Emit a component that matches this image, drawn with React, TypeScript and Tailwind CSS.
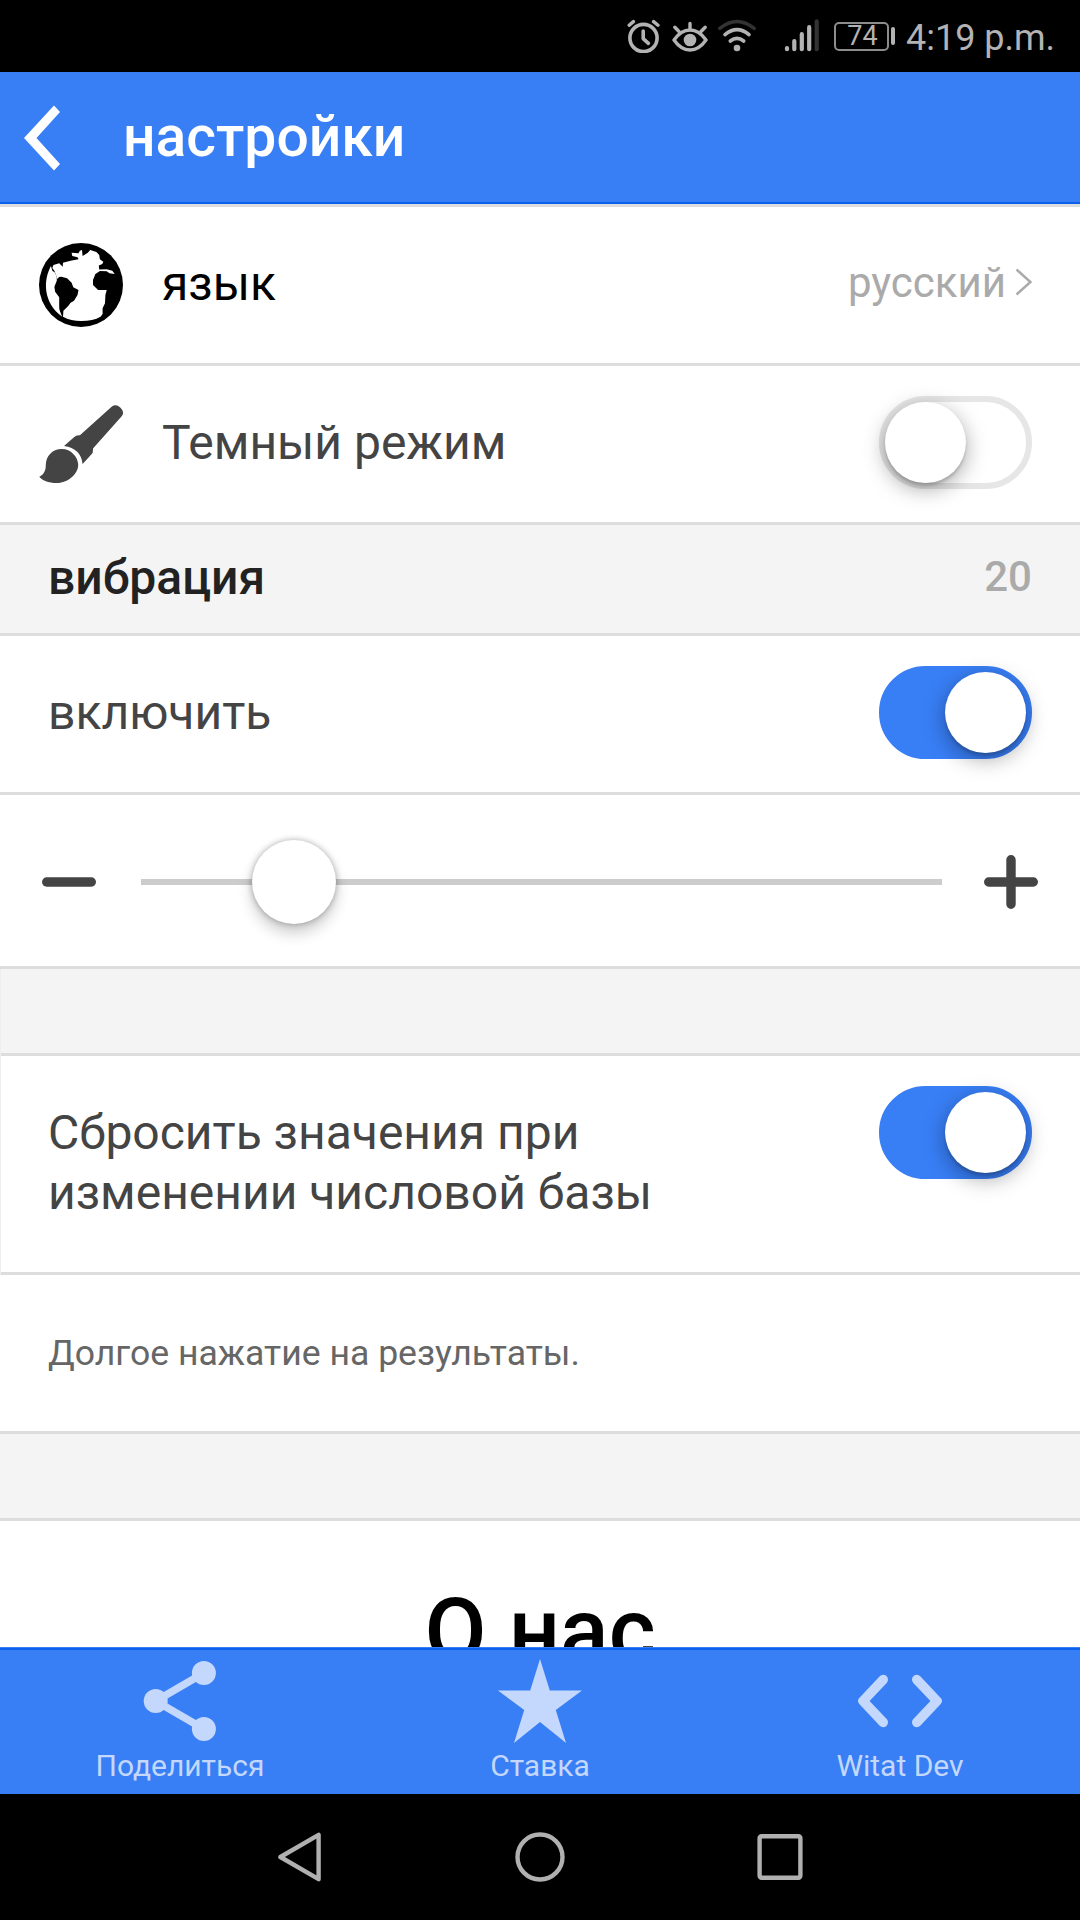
import { useState } from "react";
import type { ReactNode } from "react";
import clsx from "clsx";

interface ToggleProps {
  checked: boolean;
  onChange: (checked: boolean) => void;
}

interface TabProps {
  label: string;
  icon: ReactNode;
}

const MIN = 5;
const MAX = 100;

function AlarmIcon() {
  return (
    <svg width="34" height="34" viewBox="0 0 34 34" fill="none" stroke="#b3b3b3" strokeLinecap="round">
      <circle cx="16.5" cy="19" r="13.6" strokeWidth="3.6" />
      <path d="M16.2 12v7.6l5.2 4.8" strokeWidth="3.6" strokeLinejoin="round" />
      <path d="M2.2 6.2 6.4 2.6M26.6 2.6l4.4 3.6" strokeWidth="3.4" />
    </svg>
  );
}

function EyeIcon() {
  return (
    <svg width="36" height="34" viewBox="0 0 36 34" fill="none" stroke="#b3b3b3" strokeLinecap="round">
      <path d="M2 21Q9 11 18 11t16 10q-7 10-16 10T2 21Z" strokeWidth="3.4" strokeLinejoin="round" />
      <path d="M18 10V4.5M7 12.5 2.8 8.2M29 12.5l4.2-4.3" strokeWidth="3.4" />
      <circle cx="18" cy="21" r="6.3" fill="#b3b3b3" stroke="none" />
    </svg>
  );
}

function WifiIcon() {
  return (
    <svg width="38" height="34" viewBox="0 0 38 34" fill="none" stroke="#b3b3b3" strokeLinecap="round">
      <path d="M1.8 9.4q17.2-14 34.4 0" stroke="#333" strokeWidth="3.4" />
      <path d="M7 15.6q12-10 24 0M12.3 22q6.7-5.4 13.4 0" strokeWidth="3.6" />
      <circle cx="19" cy="29" r="3.3" fill="#b3b3b3" stroke="none" />
    </svg>
  );
}

function SignalIcon() {
  return (
    <svg width="36" height="34" viewBox="0 0 36 34" fill="none" stroke="#b3b3b3" strokeWidth="4.2" strokeLinecap="round">
      <path d="M3 29v1.2M10.3 22v8.2M17.8 15.2v15M25.2 8.2v22" />
      <path d="M32.7 2.4v27.8" stroke="#333" />
    </svg>
  );
}

function StatusBar() {
  return (
    <div className="flex h-[72px] items-center bg-black pl-[627px] text-[#b3b3b3]">
      <AlarmIcon />
      <div className="ml-[11px]">
        <EyeIcon />
      </div>
      <div className="ml-[10px]">
        <WifiIcon />
      </div>
      <div className="ml-[28px]">
        <SignalIcon />
      </div>
      <div className="ml-[14px] flex h-[29px] w-[55px] items-center justify-center rounded-[5px] border-2 border-[#8c8c8c] pl-[2px] text-[27px] leading-none">
        74
      </div>
      <div className="ml-[2px] h-[18px] w-[4px] rounded-[2px] bg-[#b3b3b3]" />
      <span className="ml-[11px] whitespace-nowrap pt-[4px] text-[36px] leading-none">4:19 p.m.</span>
    </div>
  );
}

function Header() {
  return (
    <header className="flex h-[132px] items-center border-b-2 border-[#0c60ee] bg-[#387ef5] pl-[24px] text-white">
      <svg className="mt-[2px]" width="36" height="66" viewBox="0 0 36 66">
        <path d="M30 0.5 36 7 12.5 33 36 59l-6 6.5L0 33Z" fill="currentColor" />
      </svg>
      <h1 className="ml-[63px] pb-[2px] text-[57px] font-medium leading-none">настройки</h1>
    </header>
  );
}

function EarthIcon() {
  return (
    <svg width="84" height="84" viewBox="0 0 84 84">
      <circle cx="42" cy="42" r="42" fill="#000" />
      <path
        fill="#fff"
        d="M12 23C4 37 4 60 23.3 73.7 21 69 20 66 20.2 63.7V54.3L16.1 48.7 15.4 43.7 17.8 37.7V34.3L16.1 29.7 13.3 27.7Z"
      />
      <path
        fill="#fff"
        d="M18.5 36 20 34 22.3 33.7 28.1 35.3 32.6 39.7 34.3 44.3 39.5 47 38.5 52 35 57.7 31.6 59.7 29.2 63 24.4 67.7 24 73.7Q32 78 42 78 54 78 61.5 73.7L63.6 71V65.3L66 60.3 66.4 52 67.7 47 59.1 47 54 42V37L56.4 31 60.9 28 67.7 28.3 70.5 30.3 75.7 31 73.3 27.7 67.7 26.3 60.2 26.5 59.8 22.5 63.3 21 64.3 18.7 60.9 16.3 60.2 12 57.4 9 51.2 7 48.8 9.7 43.6 13 43 7 40.9 7.7 39.5 10.3 32.6 9.7 33.3 13 38.5 14.3 39.5 16.3 31.6 17.7 24 19.7 23.7 23.7 20.2 20.3 14.4 22 13.3 25 15.5 28Z"
      />
    </svg>
  );
}

function BrushIcon() {
  return (
    <svg width="84" height="78" viewBox="0 0 84 78" fill="#444">
      <path d="M72.9 1.6Q77-1.6 81.5 2.7 85.8 7 82.9 10.9L54 43.4Q54.4 47.6 52.3 49.6L43.6 59Q42 43.5 25 41L35 32.3Q37.4 29.8 40.9 30.3Z" />
      <path d="M23 44C31.6 44 39.2 51.7 39.2 60S29.9 78 17.8 78C9.2 78 3 75.3.3 71.7 5 69.3 6.8 65.7 6.8 60 6.8 51.7 12.7 44 23 44Z" />
    </svg>
  );
}

function ShareIcon() {
  return (
    <svg width="84" height="84" viewBox="0 0 84 84" fill="currentColor">
      <path d="M65.9 14 17.7 42l48.2 28" fill="none" stroke="currentColor" strokeWidth="7.6" />
      <circle cx="65.9" cy="14" r="12" />
      <circle cx="17.7" cy="42" r="12" />
      <circle cx="65.9" cy="70" r="12" />
    </svg>
  );
}

function StarIcon() {
  return (
    <svg width="84" height="84" viewBox="0 0 84 84" fill="currentColor">
      <path d="M42 0 51.8 31.5H84L57.8 51 68 84 42 63 16 84 26.2 51 0 31.5H32.2Z" />
    </svg>
  );
}

function CodeIcon() {
  return (
    <svg width="84" height="84" viewBox="0 0 84 84" fill="none" stroke="currentColor" strokeWidth="9.6" strokeLinecap="round" strokeLinejoin="round">
      <path d="M25.2 20.6 5 42l20.2 21.4M58.8 20.6 79 42 58.8 63.4" />
    </svg>
  );
}

function Toggle({ checked, onChange }: ToggleProps) {
  return (
    <button
      type="button"
      role="switch"
      aria-checked={checked}
      onClick={() => onChange(!checked)}
      className={clsx(
        "mt-[30px] flex h-[93px] w-[153px] shrink-0 self-start rounded-full border-[6px]",
        checked ? "justify-end border-[#387ef5] bg-[#387ef5]" : "justify-start border-[#e6e6e6] bg-white"
      )}
    >
      <span className="size-[81px] rounded-full bg-white shadow-[0_6px_21px_rgba(0,0,0,0.35),0_3px_3px_rgba(0,0,0,0.15)]" />
    </button>
  );
}

function Divider({ children }: { children?: ReactNode }) {
  return (
    <div className="flex items-center justify-between border-b-[3px] border-[#ddd] bg-[#f4f4f4] px-[48px] font-medium">
      {children}
    </div>
  );
}

function Tab({ label, icon }: TabProps) {
  return (
    <a className="flex flex-1 flex-col items-center pt-[9px] text-[#c3d8fc]">
      {icon}
      <span className="mt-[5px] text-[30px] leading-[36px]">{label}</span>
    </a>
  );
}

export default function App() {
  const [dark, setDark] = useState(false);
  const [vibrate, setVibrate] = useState(true);
  const [reset, setReset] = useState(true);
  const [level, setLevel] = useState(20);

  const offset = ((level - MIN) / (MAX - MIN)) * 100;

  return (
    <div className="flex h-[1920px] w-[1080px] flex-col overflow-hidden bg-white font-[Roboto,sans-serif] text-[48px] leading-[60px] text-[#444]">
      <StatusBar />
      <Header />

      <main className="min-h-0 flex-1 overflow-hidden">
        <div className="flex h-[162px] items-center border-y-[3px] border-[#ddd] pl-[39px] pr-[48px]">
          <EarthIcon />
          <span className="ml-[39px] pb-[2px] text-black">язык</span>
          <span className="ml-auto pb-[4px] text-[42px] text-[#aaa]">русский</span>
          <svg className="mb-[7px] ml-[9px]" width="17" height="28" viewBox="0 0 17 28" fill="none" stroke="#aaa" strokeWidth="2.4">
            <path d="M1.5 1.5 15.4 14 1.5 26.5" />
          </svg>
        </div>

        <div className="flex h-[159px] items-center border-b-[3px] border-[#ddd] pl-[39px] pr-[48px]">
          <BrushIcon />
          <span className="ml-[39px] mr-auto pb-[2px]">Темный режим</span>
          <Toggle checked={dark} onChange={setDark} />
        </div>

        <Divider>
          <span className="pb-[25px] pt-[23px] text-[#222]">вибрация</span>
          <span className="pb-[26px] pt-[22px] text-[42px] text-[#aaa]">{level}</span>
        </Divider>

        <div className="flex h-[159px] items-center justify-between border-b-[3px] border-[#ddd] px-[48px]">
          <span className="pb-[2px]">включить</span>
          <Toggle checked={vibrate} onChange={setVibrate} />
        </div>

        <div className="flex h-[174px] items-center border-b-[3px] border-[#ddd] px-[42px] pt-[3px]">
          <button type="button" onClick={() => setLevel(Math.max(MIN, level - 5))}>
            <svg width="54" height="54" viewBox="0 0 54 54" stroke="#444" strokeWidth="9.4" strokeLinecap="round">
              <path d="M4.7 27h44.6" />
            </svg>
          </button>
          <div className="ml-[45px] mr-[42px] flex h-[84px] flex-1 items-center">
            <div className="relative h-[6px] w-full bg-[#ccc]">
              <span
                className="absolute -top-[39px] size-[84px] rounded-full bg-white shadow-[0_0_6px_rgba(0,0,0,0.3),0_9px_15px_rgba(0,0,0,0.2)]"
                style={{ left: `calc(${offset}% - ${(offset / 100) * 84 + 2}px)` }}
              />
            </div>
          </div>
          <button type="button" onClick={() => setLevel(Math.min(MAX, level + 5))}>
            <svg width="54" height="54" viewBox="0 0 54 54" stroke="#444" strokeWidth="9.4" strokeLinecap="round">
              <path d="M4.7 27h44.6M27 4.7v44.6" />
            </svg>
          </button>
        </div>

        <div className="border-l border-[#eee]">
          <div className="h-[87px] border-b-[3px] border-[#ddd] bg-[#f4f4f4]" />
          <div className="flex h-[219px] items-start justify-between border-b-[3px] border-[#ddd] pl-[47px] pr-[48px]">
            <p className="w-[640px] pt-[47px]">Сбросить значения при изменении числовой базы</p>
            <Toggle checked={reset} onChange={setReset} />
          </div>
        </div>

        <div className="flex h-[159px] items-center border-b-[3px] border-[#ddd] px-[48px]">
          <p className="text-[35.6px] text-[#666]">Долгое нажатие на результаты.</p>
        </div>

        <div className="h-[87px] border-b-[3px] border-[#ddd] bg-[#f4f4f4]" />

        <h2 className="pt-[57px] text-center text-[90px] font-medium leading-[108px] text-black">О нас</h2>
      </main>

      <div className="h-px bg-[#387ef5]" />
      <nav className="flex h-[146px] border-t-2 border-[#0c60ee] bg-[#387ef5]">
        <Tab label="Поделиться" icon={<ShareIcon />} />
        <Tab label="Ставка" icon={<StarIcon />} />
        <Tab label="Witat Dev" icon={<CodeIcon />} />
      </nav>

      <div className="flex h-[126px] items-center justify-center gap-[190px] bg-black">
        <svg width="50" height="50" viewBox="0 0 50 50" fill="none" stroke="#b0b0b0" strokeWidth="4.4" strokeLinejoin="round">
          <path d="M43.6 2.8v44.4L5.4 25Z" />
        </svg>
        <svg width="50" height="50" viewBox="0 0 50 50" fill="none" stroke="#b0b0b0" strokeWidth="4.4">
          <circle cx="25" cy="25" r="22.5" />
        </svg>
        <svg width="50" height="50" viewBox="0 0 50 50" fill="none" stroke="#b0b0b0" strokeWidth="4.4">
          <rect x="4.6" y="4.2" width="40.8" height="41.6" rx="2" />
        </svg>
      </div>
    </div>
  );
}
